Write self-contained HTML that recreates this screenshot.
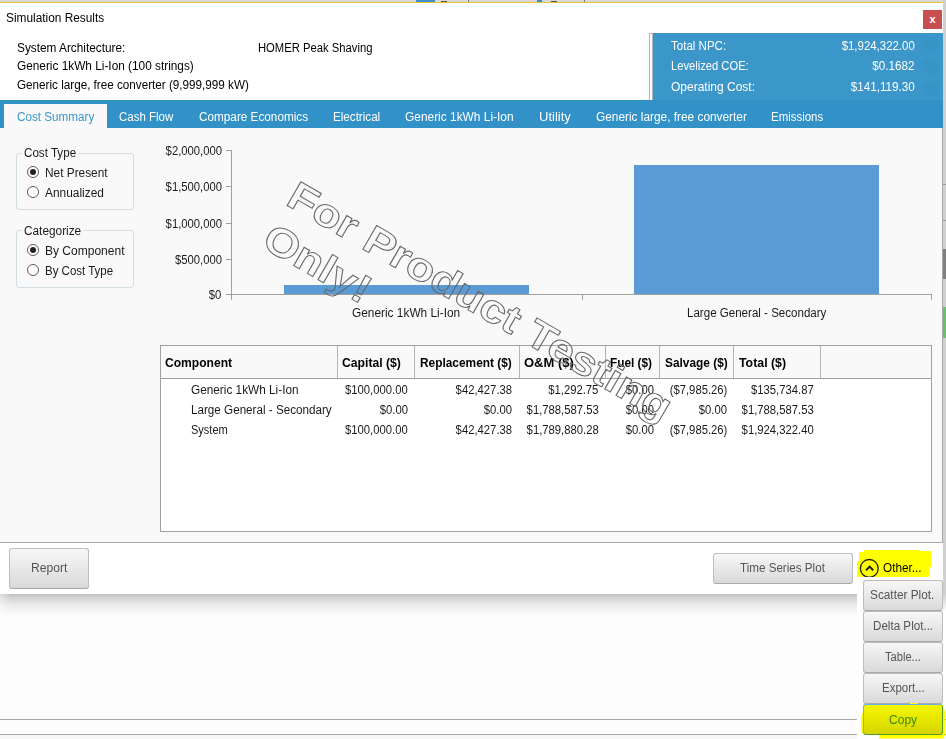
<!DOCTYPE html>
<html><head><meta charset="utf-8">
<style>
html,body{margin:0;padding:0;}
body{width:946px;height:739px;position:relative;overflow:hidden;background:#fcfcfc;font-family:"Liberation Sans", sans-serif;font-size:12px;}
.a{position:absolute;}
.t{position:absolute;white-space:nowrap;font-size:12px;line-height:12px;font-family:"Liberation Sans", sans-serif;}
.btn{position:absolute;box-sizing:border-box;border:1px solid #bdbdbd;border-bottom-color:#a9a9a9;border-radius:3px;background:linear-gradient(#f7f7f7,#d9d9d9);}
.tick{position:absolute;background:#a0a0a0;}
.radio{position:absolute;width:10px;height:10px;border:1px solid #5a5a5a;border-radius:50%;background:#fff;}
.radio.on::after{content:"";position:absolute;left:2px;top:2px;width:6px;height:6px;border-radius:50%;background:#222;}
.col{position:absolute;top:346px;width:1px;height:32px;background:#b4b4b4;}
</style></head><body>
<!-- background strips -->
<div class="a" style="left:0;top:0;width:946px;height:2px;background:#d9d9dc"></div>
<div class="a" style="left:0;top:2px;width:943px;height:1px;background:#eec422"></div>
<div class="a" style="left:416px;top:0;width:19px;height:1.5px;background:#3a8fd0"></div>
<div class="a" style="left:441px;top:1px;width:6px;height:1px;background:#555"></div>
<div class="a" style="left:468px;top:0;width:1px;height:2px;background:#777"></div>
<div class="a" style="left:537px;top:0;width:5px;height:1.5px;background:#3a8fd0"></div>
<div class="a" style="left:551px;top:1px;width:6px;height:1px;background:#555"></div>
<div class="a" style="left:584px;top:0;width:1px;height:2px;background:#777"></div>
<div class="a" style="left:943px;top:0;width:3px;height:594px;background:#d0d0d0"></div>
<div class="a" style="left:943px;top:594px;width:3px;height:18px;background:linear-gradient(#d0d0d0,#fff)"></div>
<div class="a" style="left:943px;top:612px;width:3px;height:127px;background:#fff"></div>
<div class="a" style="left:943px;top:184px;width:3px;height:1px;background:#9a9a9a"></div>
<div class="a" style="left:943px;top:220px;width:3px;height:1px;background:#9a9a9a"></div>
<div class="a" style="left:943px;top:249px;width:3px;height:30px;background:#808080"></div>
<div class="a" style="left:943px;top:307px;width:3px;height:31px;background:#6cc070"></div>
<!-- lower background -->
<div class="a" style="left:0;top:594px;width:943px;height:145px;background:#fdfdfd"></div>
<div class="a" style="left:0;top:594px;width:857px;height:22px;background:linear-gradient(rgba(0,0,0,0.24),rgba(0,0,0,0.18) 12%,rgba(0,0,0,0.07) 50%,rgba(0,0,0,0));-webkit-mask-image:linear-gradient(to right,rgba(0,0,0,0.55),#000 11px);mask-image:linear-gradient(to right,rgba(0,0,0,0.55),#000 11px)"></div>
<div class="a" style="left:0;top:719px;width:946px;height:1px;background:#a8a8a8"></div>
<div class="a" style="left:0;top:734px;width:946px;height:1px;background:#a8a8a8"></div>
<div class="a" style="left:0;top:735px;width:946px;height:4px;background:#f7f7f7"></div>

<!-- dialog -->
<div class="a" style="left:0;top:3px;width:943px;height:97px;background:#fff"></div>
<div class="a" style="left:923px;top:10px;width:19px;height:19px;background:#c74f50"></div>
<div class="a" style="left:923px;top:10px;width:19px;height:19px;color:#fff;font:700 11px/18px 'Liberation Sans',sans-serif;text-align:center">x</div>
<!-- info panel -->
<div class="a" style="left:649px;top:33px;width:4px;height:67px;box-sizing:border-box;border:1px solid #b4b4b4;border-bottom:none;background:#fff"></div>
<div class="a" style="left:653px;top:33px;width:290px;height:67px;background:#3b96ca"></div>
<div class="a" style="left:923px;top:37px;width:15px;height:15px;border-radius:50%;background:#3893c7"></div>
<div class="a" style="left:923px;top:59px;width:15px;height:15px;border-radius:50%;background:#3893c7"></div>
<div class="a" style="left:923px;top:81px;width:15px;height:15px;border-radius:50%;background:#3893c7"></div>
<!-- tab bar -->
<div class="a" style="left:0;top:100px;width:943px;height:28px;background:#3291c6"></div>
<div class="a" style="left:4px;top:104px;width:103px;height:24px;background:#f9f9f9"></div>
<!-- content -->
<div class="a" style="left:0;top:128px;width:942px;height:414px;background:#f9f9f9"></div>
<div class="a" style="left:942px;top:128px;width:1px;height:415px;background:#a8a8a8"></div>
<div class="a" style="left:0;top:542px;width:943px;height:1px;background:#a8a8a8"></div>
<!-- footer -->
<div class="a" style="left:0;top:543px;width:942px;height:51px;background:#fff"></div>

<!-- group boxes -->
<div class="a" style="left:16px;top:153px;width:116px;height:55px;border:1px solid #d3dde4;border-radius:3px"></div>
<div class="a" style="left:22px;top:150px;width:57px;height:6px;background:#f9f9f9"></div>
<div class="a" style="left:16px;top:230px;width:116px;height:56px;border:1px solid #d3dde4;border-radius:3px"></div>
<div class="a" style="left:22px;top:227px;width:62px;height:6px;background:#f9f9f9"></div>
<div class="radio on" style="left:27px;top:166px"></div>
<div class="radio" style="left:27px;top:186px"></div>
<div class="radio on" style="left:27px;top:244px"></div>
<div class="radio" style="left:27px;top:264px"></div>

<!-- chart -->
<div class="tick" style="left:231px;top:150px;width:1px;height:150px"></div>
<div class="tick" style="left:226px;top:150px;width:5px;height:1px"></div>
<div class="tick" style="left:226px;top:186px;width:5px;height:1px"></div>
<div class="tick" style="left:226px;top:223px;width:5px;height:1px"></div>
<div class="tick" style="left:226px;top:259px;width:5px;height:1px"></div>
<div class="tick" style="left:226px;top:294px;width:706px;height:1px"></div>
<div class="tick" style="left:582px;top:294px;width:1px;height:6px"></div>
<div class="tick" style="left:931px;top:294px;width:1px;height:6px"></div>
<div class="a" style="left:284px;top:285px;width:245px;height:9px;background:#5b9bd5"></div>
<div class="a" style="left:634px;top:165px;width:245px;height:129px;background:#5b9bd5"></div>

<!-- table -->
<div class="a" style="left:160px;top:345px;width:770px;height:185px;border:1px solid #a0a0a0;background:#fff"></div>
<div class="a" style="left:161px;top:346px;width:770px;height:32px;background:#f9f9f9"></div>
<div class="a" style="left:161px;top:378px;width:770px;height:1px;background:#a0a0a0"></div>
<div class="col" style="left:337px"></div>
<div class="col" style="left:414px"></div>
<div class="col" style="left:519px"></div>
<div class="col" style="left:605px"></div>
<div class="col" style="left:659px"></div>
<div class="col" style="left:733px"></div>
<div class="col" style="left:820px"></div>

<!-- buttons -->
<div class="btn" style="left:9px;top:548px;width:80px;height:41px"></div>
<div class="btn" style="left:713px;top:553px;width:140px;height:31px"></div>
<svg class="a" style="left:850px;top:545px" width="96" height="40" viewBox="850 545 96 40">
<path d="M859 552 L864 552 L864 550 L920 550 L920 551 L931 551 L931 567 L929 567 L929 577 L857 577 L857 561 L859 561 Z" fill="#ffff00"/>
<circle cx="869.3" cy="568.4" r="8.9" fill="none" stroke="#1e1e1e" stroke-width="1.3"/>
<polyline points="866.1,570.3 869.6,566.6 873.2,570.3" fill="none" stroke="#1e1e1e" stroke-width="2"/>
</svg>
<div class="a" style="left:857px;top:577px;width:86px;height:162px;background:#fff"></div>
<div class="btn" style="left:863px;top:580px;width:80px;height:31px"></div>
<div class="btn" style="left:863px;top:611px;width:80px;height:31px"></div>
<div class="btn" style="left:863px;top:642px;width:80px;height:31px"></div>
<div class="btn" style="left:863px;top:673px;width:80px;height:31px"></div>
<svg class="a" style="left:850px;top:695px" width="96" height="44" viewBox="850 695 96 44">
<path d="M861 717 L863 712 L863 705 L910 705 L910 703 L918 703 L918 705 L943 705 L945 712 L945 735 L943 738.5 L879 738.5 L879 735 L861 733 Z" fill="#ffff00"/>
</svg>
<div class="a" style="left:863px;top:704px;width:80px;height:31px;box-sizing:border-box;border:1px solid #68aee6;border-right-color:#5a9a28;border-bottom-color:#5a9a28;border-radius:3px;background:linear-gradient(#f6f600,#d5d500)"></div>

<span class="t" style="top:12px;font-weight:400;color:#000;left:6.4px;transform:scaleX(0.9882);transform-origin:0 0;">Simulation Results</span>
<span class="t" style="top:42px;font-weight:400;color:#000;left:16.6px;transform:scaleX(0.9850);transform-origin:0 0;">System Architecture:</span>
<span class="t" style="top:42px;font-weight:400;color:#000;left:258.2px;transform:scaleX(0.9372);transform-origin:0 0;">HOMER Peak Shaving</span>
<span class="t" style="top:60px;font-weight:400;color:#000;left:16.6px;transform:scaleX(0.9855);transform-origin:0 0;">Generic 1kWh Li-Ion (100 strings)</span>
<span class="t" style="top:79px;font-weight:400;color:#000;left:16.6px;transform:scaleX(0.9735);transform-origin:0 0;">Generic large, free converter (9,999,999 kW)</span>
<span class="t" style="top:40px;font-weight:400;color:#ffffff;left:670.7px;transform:scaleX(0.9606);transform-origin:0 0;">Total NPC:</span>
<span class="t" style="top:60px;font-weight:400;color:#ffffff;left:670.7px;transform:scaleX(0.9319);transform-origin:0 0;">Levelized COE:</span>
<span class="t" style="top:81px;font-weight:400;color:#ffffff;left:670.7px;transform:scaleX(0.9994);transform-origin:0 0;">Operating Cost:</span>
<span class="t" style="top:40px;font-weight:400;color:#ffffff;right:31.2px;transform:scaleX(0.9524);transform-origin:100% 0;">$1,924,322.00</span>
<span class="t" style="top:60px;font-weight:400;color:#ffffff;right:31.2px;transform:scaleX(0.9726);transform-origin:100% 0;">$0.1682</span>
<span class="t" style="top:81px;font-weight:400;color:#ffffff;right:31.2px;transform:scaleX(0.9750);transform-origin:100% 0;">$141,119.30</span>
<span class="t" style="top:111px;font-weight:400;color:#3a95c9;left:17.2px;transform:scaleX(0.9741);transform-origin:0 0;">Cost Summary</span>
<span class="t" style="top:111px;font-weight:400;color:#ffffff;left:119.0px;transform:scaleX(0.9579);transform-origin:0 0;">Cash Flow</span>
<span class="t" style="top:111px;font-weight:400;color:#ffffff;left:198.5px;transform:scaleX(0.9796);transform-origin:0 0;">Compare Economics</span>
<span class="t" style="top:111px;font-weight:400;color:#ffffff;left:332.8px;transform:scaleX(0.9694);transform-origin:0 0;">Electrical</span>
<span class="t" style="top:111px;font-weight:400;color:#ffffff;left:405.0px;transform:scaleX(0.9928);transform-origin:0 0;">Generic 1kWh Li-Ion</span>
<span class="t" style="top:111px;font-weight:400;color:#ffffff;left:538.9px;transform:scaleX(1.0871);transform-origin:0 0;">Utility</span>
<span class="t" style="top:111px;font-weight:400;color:#ffffff;left:595.7px;transform:scaleX(0.9879);transform-origin:0 0;">Generic large, free converter</span>
<span class="t" style="top:111px;font-weight:400;color:#ffffff;left:771.4px;transform:scaleX(0.9545);transform-origin:0 0;">Emissions</span>
<span class="t" style="top:147px;font-weight:400;color:#1a1a1a;left:23.8px;transform:scaleX(0.9682);transform-origin:0 0;">Cost Type</span>
<span class="t" style="top:167px;font-weight:400;color:#1a1a1a;left:44.9px;transform:scaleX(0.9878);transform-origin:0 0;">Net Present</span>
<span class="t" style="top:187px;font-weight:400;color:#1a1a1a;left:44.9px;transform:scaleX(0.9917);transform-origin:0 0;">Annualized</span>
<span class="t" style="top:225px;font-weight:400;color:#1a1a1a;left:23.8px;transform:scaleX(0.9857);transform-origin:0 0;">Categorize</span>
<span class="t" style="top:245px;font-weight:400;color:#1a1a1a;left:44.9px;transform:scaleX(1.0014);transform-origin:0 0;">By Component</span>
<span class="t" style="top:265px;font-weight:400;color:#1a1a1a;left:44.9px;transform:scaleX(0.9570);transform-origin:0 0;">By Cost Type</span>
<span class="t" style="top:145px;font-weight:400;color:#1a1a1a;right:724.4px;transform:scaleX(0.9400);transform-origin:100% 0;">$2,000,000</span>
<span class="t" style="top:181px;font-weight:400;color:#1a1a1a;right:724.4px;transform:scaleX(0.9400);transform-origin:100% 0;">$1,500,000</span>
<span class="t" style="top:218px;font-weight:400;color:#1a1a1a;right:724.4px;transform:scaleX(0.9400);transform-origin:100% 0;">$1,000,000</span>
<span class="t" style="top:254px;font-weight:400;color:#1a1a1a;right:724.4px;transform:scaleX(0.9400);transform-origin:100% 0;">$500,000</span>
<span class="t" style="top:289px;font-weight:400;color:#1a1a1a;right:724.4px;transform:scaleX(0.9400);transform-origin:100% 0;">$0</span>
<span class="t" style="top:307px;font-weight:400;color:#1a1a1a;left:351.5px;transform:scaleX(0.9891);transform-origin:0 0;">Generic 1kWh Li-Ion</span>
<span class="t" style="top:307px;font-weight:400;color:#1a1a1a;left:687.0px;transform:scaleX(0.9630);transform-origin:0 0;">Large General - Secondary</span>
<span class="t" style="top:357px;font-weight:700;color:#000;left:165.2px;transform:scaleX(1.0067);transform-origin:0 0;">Component</span>
<span class="t" style="top:357px;font-weight:700;color:#000;left:341.8px;transform:scaleX(1.0152);transform-origin:0 0;">Capital ($)</span>
<span class="t" style="top:357px;font-weight:700;color:#000;left:420.0px;transform:scaleX(0.9903);transform-origin:0 0;">Replacement ($)</span>
<span class="t" style="top:357px;font-weight:700;color:#000;left:523.6px;transform:scaleX(1.0826);transform-origin:0 0;">O&M ($)</span>
<span class="t" style="top:357px;font-weight:700;color:#000;left:610.4px;transform:scaleX(0.9843);transform-origin:0 0;">Fuel ($)</span>
<span class="t" style="top:357px;font-weight:700;color:#000;left:664.6px;transform:scaleX(0.9893);transform-origin:0 0;">Salvage ($)</span>
<span class="t" style="top:357px;font-weight:700;color:#000;left:739.3px;transform:scaleX(1.0288);transform-origin:0 0;">Total ($)</span>
<span class="t" style="top:384px;font-weight:400;color:#1a1a1a;left:190.6px;transform:scaleX(0.9836);transform-origin:0 0;">Generic 1kWh Li-Ion</span>
<span class="t" style="top:384px;font-weight:400;color:#1a1a1a;right:538.1px;transform:scaleX(0.9400);transform-origin:100% 0;">$100,000.00</span>
<span class="t" style="top:384px;font-weight:400;color:#1a1a1a;right:433.6px;transform:scaleX(0.9400);transform-origin:100% 0;">$42,427.38</span>
<span class="t" style="top:384px;font-weight:400;color:#1a1a1a;right:347.4px;transform:scaleX(0.9400);transform-origin:100% 0;">$1,292.75</span>
<span class="t" style="top:384px;font-weight:400;color:#1a1a1a;right:292.4px;transform:scaleX(0.9400);transform-origin:100% 0;">$0.00</span>
<span class="t" style="top:384px;font-weight:400;color:#1a1a1a;right:218.5px;transform:scaleX(0.9400);transform-origin:100% 0;">($7,985.26)</span>
<span class="t" style="top:384px;font-weight:400;color:#1a1a1a;right:132.2px;transform:scaleX(0.9400);transform-origin:100% 0;">$135,734.87</span>
<span class="t" style="top:404px;font-weight:400;color:#1a1a1a;left:190.6px;transform:scaleX(0.9720);transform-origin:0 0;">Large General - Secondary</span>
<span class="t" style="top:404px;font-weight:400;color:#1a1a1a;right:538.1px;transform:scaleX(0.9400);transform-origin:100% 0;">$0.00</span>
<span class="t" style="top:404px;font-weight:400;color:#1a1a1a;right:433.6px;transform:scaleX(0.9400);transform-origin:100% 0;">$0.00</span>
<span class="t" style="top:404px;font-weight:400;color:#1a1a1a;right:347.4px;transform:scaleX(0.9400);transform-origin:100% 0;">$1,788,587.53</span>
<span class="t" style="top:404px;font-weight:400;color:#1a1a1a;right:292.4px;transform:scaleX(0.9400);transform-origin:100% 0;">$0.00</span>
<span class="t" style="top:404px;font-weight:400;color:#1a1a1a;right:218.5px;transform:scaleX(0.9400);transform-origin:100% 0;">$0.00</span>
<span class="t" style="top:404px;font-weight:400;color:#1a1a1a;right:132.2px;transform:scaleX(0.9400);transform-origin:100% 0;">$1,788,587.53</span>
<span class="t" style="top:424px;font-weight:400;color:#1a1a1a;left:190.6px;transform:scaleX(0.9171);transform-origin:0 0;">System</span>
<span class="t" style="top:424px;font-weight:400;color:#1a1a1a;right:538.1px;transform:scaleX(0.9400);transform-origin:100% 0;">$100,000.00</span>
<span class="t" style="top:424px;font-weight:400;color:#1a1a1a;right:433.6px;transform:scaleX(0.9400);transform-origin:100% 0;">$42,427.38</span>
<span class="t" style="top:424px;font-weight:400;color:#1a1a1a;right:347.4px;transform:scaleX(0.9400);transform-origin:100% 0;">$1,789,880.28</span>
<span class="t" style="top:424px;font-weight:400;color:#1a1a1a;right:292.4px;transform:scaleX(0.9400);transform-origin:100% 0;">$0.00</span>
<span class="t" style="top:424px;font-weight:400;color:#1a1a1a;right:218.5px;transform:scaleX(0.9400);transform-origin:100% 0;">($7,985.26)</span>
<span class="t" style="top:424px;font-weight:400;color:#1a1a1a;right:132.2px;transform:scaleX(0.9400);transform-origin:100% 0;">$1,924,322.40</span>
<span class="t" style="top:562px;font-weight:400;color:#555555;left:31.1px;transform:scaleX(1.0075);transform-origin:0 0;">Report</span>
<span class="t" style="top:562px;font-weight:400;color:#555555;left:740.4px;transform:scaleX(0.9692);transform-origin:0 0;">Time Series Plot</span>
<span class="t" style="top:562px;font-weight:400;color:#000;left:883.2px;transform:scaleX(0.9807);transform-origin:0 0;">Other...</span>
<span class="t" style="top:589px;font-weight:400;color:#555555;left:870.4px;transform:scaleX(0.9851);transform-origin:0 0;">Scatter Plot.</span>
<span class="t" style="top:620px;font-weight:400;color:#555555;left:873.1px;transform:scaleX(0.9689);transform-origin:0 0;">Delta Plot...</span>
<span class="t" style="top:651px;font-weight:400;color:#555555;left:884.9px;transform:scaleX(0.9276);transform-origin:0 0;">Table...</span>
<span class="t" style="top:682px;font-weight:400;color:#555555;left:881.8px;transform:scaleX(0.9555);transform-origin:0 0;">Export...</span>
<span class="t" style="top:714px;font-weight:400;color:#3d8a12;left:889.3px;transform:scaleX(1.0030);transform-origin:0 0;">Copy</span>
<svg class="a" style="left:0;top:0;opacity:0.999;will-change:transform" width="946" height="739" viewBox="0 0 946 739">
<g transform="translate(284.6,204) rotate(30)" fill="none" stroke="#6a6a6a" stroke-width="1" font-family="Liberation Sans, sans-serif" font-weight="700" font-size="40">
<text x="0" y="0" textLength="436" lengthAdjust="spacingAndGlyphs">For Product Testing</text>
<text x="0" y="48.7" textLength="117" lengthAdjust="spacingAndGlyphs">Only!</text>
</g></svg>

</body></html>
